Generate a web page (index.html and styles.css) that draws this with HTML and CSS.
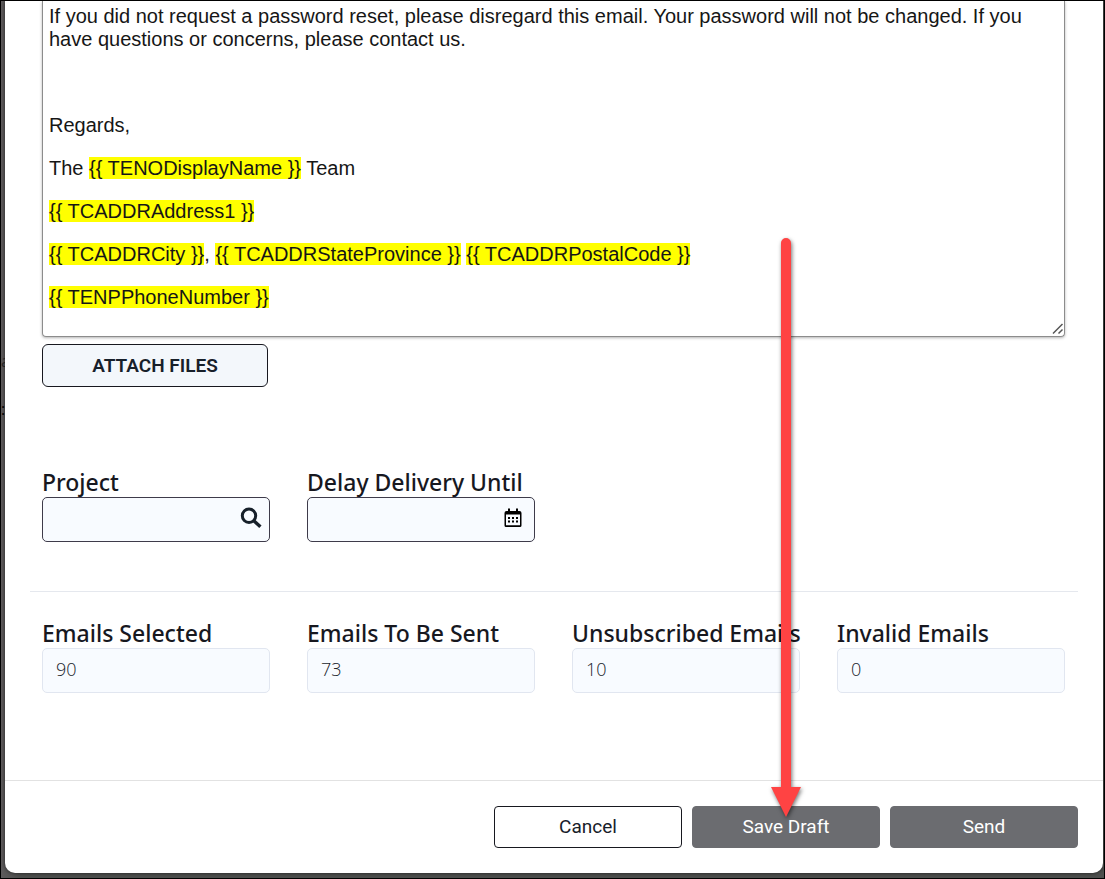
FILE: index.html
```html
<!DOCTYPE html>
<html lang="en">
<head>
<meta charset="utf-8">
<title>Compose Email</title>
<link rel="stylesheet" href="styles.css">
</head>
<body>
<div class="page">
  <div class="backdrop" aria-hidden="true"><span class="backdrop-text">a</span><span class="backdrop-text backdrop-dark">:</span></div>
  <main class="dialog">
    <div class="dialog-body">
      <section class="compose">
        <div class="editor" contenteditable="true" role="textbox" aria-multiline="true" aria-label="Email body" spellcheck="false">
          <p>If you did not request a password reset, please disregard this email. Your password will not be changed. If you have questions or concerns, please contact us.</p>
          <p>&nbsp;</p>
          <p>Regards,</p>
          <p>The <mark>{{ TENODisplayName }}</mark> Team</p>
          <p><mark>{{ TCADDRAddress1 }}</mark></p>
          <p><mark>{{ TCADDRCity }}</mark>, <mark>{{ TCADDRStateProvince }}</mark> <mark>{{ TCADDRPostalCode }}</mark></p>
          <p><mark>{{ TENPPhoneNumber }}</mark></p>
          <svg class="grip" width="12" height="12" viewBox="0 0 12 12" fill="none" stroke="#555" stroke-width="1.500" aria-hidden="true"><path d="M1 10.500 10.500 1M6.500 10.500 10.500 6.500"/></svg>
        </div>
        <button class="attach" type="button">ATTACH FILES</button>
      </section>
      <section class="fields delivery">
        <div class="field">
          <label for="project">Project</label>
          <div class="control">
            <input id="project" type="text">
            <button class="icon-button" type="button" aria-label="Search projects">
              <svg width="22" height="22" viewBox="0 0 22 22" fill="none" stroke="#17202a" stroke-width="3"><circle cx="9" cy="8.800" r="6.700"/><path d="M13.500 13.500 20.400 19.800" stroke-width="3.400"/></svg>
            </button>
          </div>
        </div>
        <div class="field">
          <label for="delay">Delay Delivery Until</label>
          <div class="control control-date">
            <input id="delay" type="text">
            <button class="icon-button" type="button" aria-label="Choose date">
              <svg width="18" height="20" viewBox="0 0 18 20"><path fill="#000" fill-rule="evenodd" d="M4 .5h2V3h6V.5h2V3h1.500a2 2 0 0 1 2 2v12.500a1.500 1.500 0 0 1-1.500 1.500H2A1.500 1.500 0 0 1 .5 17.500V5a2 2 0 0 1 2-2H4zM2 6.500v10.800h14V6.500z"/><path fill="#000" d="M4 9h2v2H4zM8 9h2v2H8zM12 9h2v2h-2zM4 12.500h2v2H4zM8 12.500h2v2H8zM12 12.500h2v2h-2z"/></svg>
            </button>
          </div>
        </div>
      </section>
      <hr class="divider">
      <section class="fields totals">
        <div class="field"><label for="selected">Emails Selected</label><div class="control"><input id="selected" type="text" value="90" readonly></div></div>
        <div class="field"><label for="to-send">Emails To Be Sent</label><div class="control"><input id="to-send" type="text" value="73" readonly></div></div>
        <div class="field"><label for="unsubscribed">Unsubscribed Emails</label><div class="control"><input id="unsubscribed" type="text" value="10" readonly></div></div>
        <div class="field"><label for="invalid">Invalid Emails</label><div class="control"><input id="invalid" type="text" value="0" readonly></div></div>
      </section>
    </div>
    <footer class="actions">
      <button class="action action-cancel" type="button">Cancel</button>
      <button class="action" type="button">Save Draft</button>
      <button class="action" type="button">Send</button>
    </footer>
  </main>
  <svg class="arrow" width="40" height="590" viewBox="0 0 40 590" aria-hidden="true"><path fill="#ff4343" d="M15 10a5 5 0 0 1 10 0V554H35L20 584 5 554H15z"/></svg>
</div>
</body>
</html>
```

FILE: styles.css
```css
* {
  box-sizing: border-box;
}

body {
  margin: 0;
  font-family: "Open Sans", "Noto Sans", sans-serif;
  color: #17181f;
}

.page {
  position: relative;
  display: flex;
  min-height: 100vh;
  padding-bottom: 5px;
  padding-right: 1px;
  border: 1px solid #000;
  background: linear-gradient(90deg, #5e5b5c, #4d4f4d 20px);
}

.backdrop {
  display: flex;
  flex: 0 0 4px;
  flex-direction: column;
  align-items: flex-start;
  gap: 24px;
  width: 4px;
  min-width: 0;
  max-width: 4px;
  padding-top: 348px;
}

.backdrop-text {
  font-size: 16px;
  line-height: 24px;
  color: #2e2c2d;
}

.backdrop-dark {
  color: #000;
}

.dialog {
  position: relative;
  display: flex;
  flex: 1;
  flex-direction: column;
  min-width: 0;
  border-radius: 0 0 10px 10px;
  background: #fff;
  box-shadow: 0 0 4px rgba(0, 0, 0, 0.6);
}

.dialog-body {
  flex: 1;
  padding: 0 25px;
}

.compose {
  padding: 0 13px 0 12px;
}

.editor {
  position: relative;
  padding: 4px 7px 7px 6px;
  border: 1px solid #8c8c8c;
  border-top: 0;
  border-radius: 0 0 4px 4px;
  box-shadow: 0 1px 3px rgba(0, 0, 0, 0.3);
  font-family: "Liberation Sans", Arial, sans-serif;
  font-size: 20px;
  line-height: 23px;
  color: #161616;
}

.editor p {
  margin: 0 0 20px;
}

.editor mark {
  background: #ff0;
  color: inherit;
}

.grip {
  position: absolute;
  right: 0;
  bottom: 1px;
}

.attach {
  width: 226px;
  height: 43px;
  margin-top: 7px;
  border: 1px solid #17181f;
  border-radius: 6px;
  background: #f3f7fb;
  font-family: Roboto, sans-serif;
  font-size: 19px;
  font-weight: 600;
  color: #17202a;
}

.fields {
  display: grid;
  grid-template-columns: repeat(4, minmax(0, 1fr));
  gap: 37px;
  padding: 0 13px 0 12px;
}

.delivery {
  margin-top: 80px;
}

.field label {
  display: block;
  font-family: "Noto Sans", "Open Sans", sans-serif;
  font-size: 23px;
  font-weight: 500;
  line-height: 30px;
  white-space: nowrap;
}

.control {
  display: flex;
  align-items: center;
  height: 45px;
  padding: 0 7px 3px 13px;
  border: 1px solid #3e3b4a;
  border-radius: 5px;
  background: #f8fbff;
}

.control-date {
  padding-right: 12px;
}

.totals .control {
  border-color: #e1e6f0;
}

.control input {
  flex: 1;
  min-width: 0;
  padding: 0;
  border: 0;
  outline: 0;
  background: transparent;
  font-family: inherit;
  font-size: 18px;
  font-weight: 300;
  color: #20242c;
}

.icon-button {
  display: flex;
  padding: 0;
  border: 0;
  background: none;
}

.divider {
  margin: 49px 0 26px;
  border: 0;
  border-top: 1px solid #e5e8ee;
}

.actions {
  display: flex;
  justify-content: flex-end;
  gap: 10px;
  padding: 25px;
  border-top: 1px solid #e2e2e2;
}

.action {
  width: 188px;
  height: 42px;
  padding: 0 0 2px;
  border: 1px solid #6b6c70;
  border-radius: 4px;
  background: #6b6c70;
  font-family: Roboto, sans-serif;
  font-size: 19px;
  color: #fff;
}

.action-cancel {
  border-color: #17181f;
  background: #fff;
  color: #17202a;
}

.arrow {
  position: absolute;
  top: 232px;
  left: 765px;
  filter: drop-shadow(1px 2px 2px rgba(0, 0, 0, 0.55));
  pointer-events: none;
}
```
